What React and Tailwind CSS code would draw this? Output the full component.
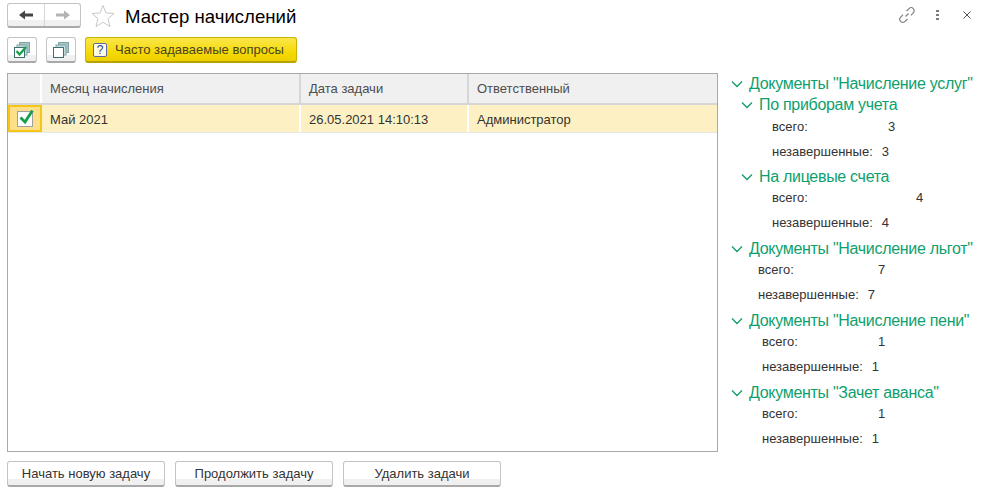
import React from "react";

const Chevron = ({ className = "" }) => (
  <svg width="12" height="8" viewBox="0 0 12 8" className={className}>
    <path d="M1 1.5 L6 6.5 L11 1.5" fill="none" stroke="#0f9d6b" strokeWidth="1.3" />
  </svg>
);

const Stat = ({ className, valueClass, total, open }) => (
  <div className={`text-[13px] leading-[14px] text-[#333] ${className}`}>
    <div className="flex h-[25px] items-start">
      <span className={`shrink-0 ${valueClass}`}>всего:</span>
      <span>{total}</span>
    </div>
    <div className="flex h-[22px] items-start">
      <span>незавершенные:</span>
      <span className="ml-[9px]">{open}</span>
    </div>
  </div>
);

const Group = ({ title, children, sub }) => (
  <div>
    <div className={`flex items-center ${sub ? "h-[20px] pl-[10px]" : "h-[22px]"}`}>
      <Chevron className="mr-[6px] shrink-0" />
      <span className="whitespace-nowrap text-[16px] leading-[20px] tracking-[-0.3px] text-[#0e9f6e]">{title}</span>
    </div>
    {children}
  </div>
);

const btn =
  "rounded-[3px] border border-[#c4c4c4] border-b-2 border-b-[#a9a9a9] bg-[linear-gradient(#fff_0,#fff_72%,#f0f0f0_72%)]";

const BottomButton = ({ children }) => (
  <button className={`h-[26px] w-[158px] text-[13px] text-[#333] ${btn}`}>{children}</button>
);

export default function App() {
  return (
    <div className="h-[497px] w-[988px] overflow-hidden bg-white font-['Liberation_Sans',Arial,sans-serif]">
      {/* top bar */}
      <div className="flex h-[37px] items-start pl-[7px] pt-[3px]">
        <div className={`flex h-[25px] w-[74px] ${btn}`}>
          <div className="flex w-[37px] items-center justify-center border-r border-[#d6d6d6]">
            <svg width="16" height="12" viewBox="0 0 16 12">
              <path d="M1 6 L7 1.5 V4.5 H15 V7.5 H7 V10.5 Z" fill="#444" />
            </svg>
          </div>
          <div className="flex flex-1 items-center justify-center">
            <svg width="16" height="12" viewBox="0 0 16 12">
              <path d="M15 6 L9 1.5 V4.5 H1 V7.5 H9 V10.5 Z" fill="#b4b4b4" />
            </svg>
          </div>
        </div>
        <svg width="24" height="24" viewBox="0 0 24 24" className="ml-[10px] mt-px">
          <path d="M12 1.5 L15 9 L23 9.5 L17 14.7 L19 22.5 L12 18.3 L5 22.5 L7 14.7 L1 9.5 L9 9 Z" fill="#fff" stroke="#c8c8c8" strokeWidth="1" />
        </svg>
        <h1 className="ml-[10px] mt-px text-[18.6px] leading-[25px] text-black">Мастер начислений</h1>
        <div className="ml-auto flex items-center pr-[16px] pt-[3px]">
          <svg width="18" height="18" viewBox="0 0 18 18" fill="none" stroke="#7a7a7a" strokeWidth="1.1">
            <path d="M7.5 10.5 L10.5 7.5" />
            <path d="M8.5 5 L11 2.6 a3 3 0 0 1 4.3 4.3 L12.9 9.4" />
            <path d="M9.5 13 L7 15.4 a3 3 0 0 1 -4.3 -4.3 L5.1 8.6" />
          </svg>
          <div className="ml-[20px] flex flex-col gap-[1.5px]">
            <span className="h-[2.5px] w-[3px] bg-[#7b7b7b]" />
            <span className="h-[2.5px] w-[3px] bg-[#7b7b7b]" />
            <span className="h-[2.5px] w-[3px] bg-[#7b7b7b]" />
          </div>
          <svg width="10" height="10" viewBox="0 0 10 10" className="ml-[23px]" stroke="#555" strokeWidth="1">
            <path d="M1.5 1.5 L8.5 8.5 M8.5 1.5 L1.5 8.5" />
          </svg>
        </div>
      </div>

      {/* toolbar */}
      <div className="flex h-[36px] items-start gap-[9px] pl-[7px]">
        <button className={`flex h-[26px] w-[30px] items-center justify-center ${btn}`}>
          <svg width="16" height="16" viewBox="0 0 16 16">
            <rect x="5.5" y="0.5" width="10" height="10" fill="#a9c6c6" stroke="#7fa5a6" />
            <rect x="3" y="3" width="10" height="10" fill="#c3d9d9" stroke="#7fa5a6" />
            <rect x="0.5" y="5.5" width="10" height="10" fill="#fff" stroke="#3d6f70" />
            <path d="M2.5 9 L5.5 12.5 L12 5" fill="none" stroke="#12a04a" strokeWidth="2.2" />
          </svg>
        </button>
        <button className={`flex h-[26px] w-[30px] items-center justify-center ${btn}`}>
          <svg width="16" height="16" viewBox="0 0 16 16">
            <rect x="5.5" y="0.5" width="10" height="10" fill="#a9c6c6" stroke="#7fa5a6" />
            <rect x="3" y="3" width="10" height="10" fill="#c3d9d9" stroke="#7fa5a6" />
            <rect x="0.5" y="5.5" width="10" height="10" fill="#fff" stroke="#3d6f70" />
          </svg>
        </button>
        <button className="flex h-[26px] w-[212px] items-center rounded-[3px] border border-[#c9b400] border-b-2 border-b-[#b8a200] bg-[linear-gradient(#fbe64b,#f5d800_70%,#eccf00)] pl-[7px] text-[13px] text-[#4a4420]">
          <span className="flex h-[14px] w-[14px] items-center justify-center rounded-[2px] border border-[#5a6aa8] bg-[#fffbe0] text-[12px] leading-none text-[#2b3a8c]">?</span>
          <span className="ml-[8px]">Часто задаваемые вопросы</span>
        </button>
      </div>

      {/* main area */}
      <div className="flex h-[379px] pl-[7px]">
        <div className="w-[711px] shrink-0 border border-[#a9a9a9]">
          <div className="flex h-[31px] border-b-2 border-[#d6d6d6] bg-[#f0f0f0] text-[13px] text-[#4d4d4d]">
            <div className="w-[34px] border-r-2 border-white" />
            <div className="flex w-[259px] items-center border-r-2 border-[#d6d6d6] pl-[8px]">Месяц начисления</div>
            <div className="flex w-[168px] items-center border-r-2 border-[#d6d6d6] pl-[8px]">Дата задачи</div>
            <div className="flex flex-1 items-center pl-[8px]">Ответственный</div>
          </div>
          <div className="flex h-[28px] border-b border-[#e8e8e8] bg-[#fdf1c3] text-[13px] text-[#333]">
            <div className="flex w-[34px] items-center justify-center border-2 border-[#f5c518] bg-[#fee08b]">
              <div className="relative h-[16px] w-[16px] border border-[#a0a0a0] bg-white">
                <svg width="18" height="16" viewBox="0 0 18 16" className="absolute -top-[3px] left-0">
                  <path d="M2.5 8.5 L7 13 L14.5 1.5" fill="none" stroke="#12a04a" strokeWidth="2.8" />
                </svg>
              </div>
            </div>
            <div className="flex w-[259px] items-center border-r-2 border-white pl-[8px] pt-[2px]">Май 2021</div>
            <div className="flex w-[168px] items-center border-r-2 border-white pl-[8px] pt-[2px]">26.05.2021 14:10:13</div>
            <div className="flex flex-1 items-center pl-[8px] pt-[2px]">Администратор</div>
          </div>
        </div>

        {/* right panel */}
        <div className="ml-[13px]">
          <Group title={'Документы "Начисление услуг"'}>
            <Group sub title="По приборам учета">
              <Stat className="ml-[41px] pt-[5px]" valueClass="w-[116px]" total="3" open="3" />
            </Group>
            <Group sub title="На лицевые счета">
              <Stat className="ml-[41px] pt-[4px]" valueClass="w-[144px]" total="4" open="4" />
            </Group>
          </Group>
          <Group title={'Документы "Начисление льгот"'}>
            <Stat className="ml-[27px] pt-[3px]" valueClass="w-[120px]" total="7" open="7" />
          </Group>
          <Group title={'Документы "Начисление пени"'}>
            <Stat className="ml-[31px] pt-[3px]" valueClass="w-[116px]" total="1" open="1" />
          </Group>
          <Group title={'Документы "Зачет аванса"'}>
            <Stat className="ml-[31px] pt-[3px]" valueClass="w-[116px]" total="1" open="1" />
          </Group>
        </div>
      </div>

      {/* bottom buttons */}
      <div className="mt-[9px] flex gap-[10px] pl-[7px]">
        <BottomButton>Начать новую задачу</BottomButton>
        <BottomButton>Продолжить задачу</BottomButton>
        <BottomButton>Удалить задачи</BottomButton>
      </div>
    </div>
  );
}
